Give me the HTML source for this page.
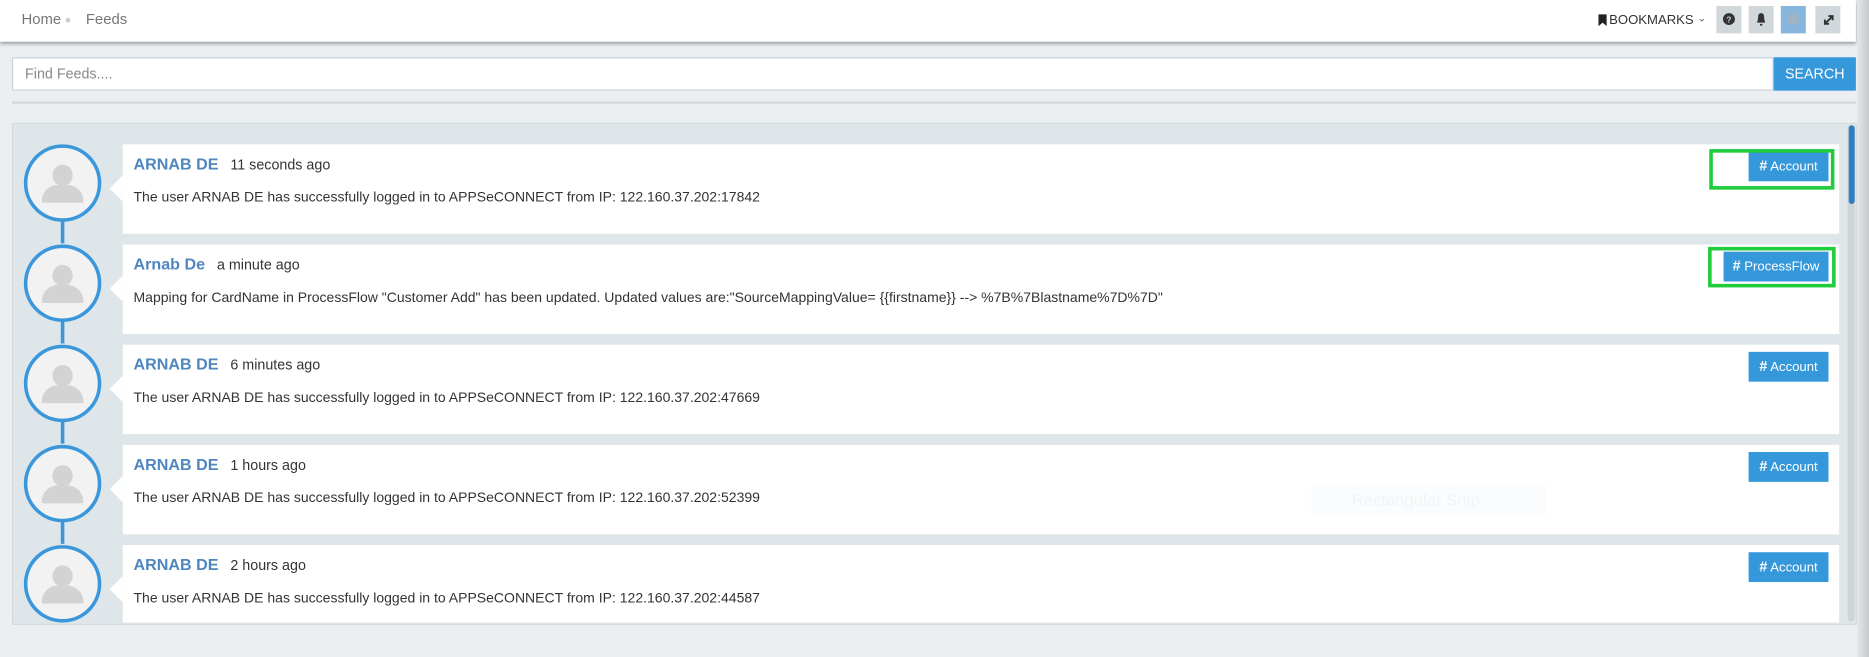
<!DOCTYPE html>
<html><head><meta charset="utf-8"><style>
html,body{margin:0;padding:0;width:1869px;height:656px;overflow:hidden;background:#ebeff2;}
#w{position:absolute;left:0;top:0;width:1568px;height:551px;transform:scale(1.19196,1.1927);transform-origin:0 0;font-family:"Liberation Sans",sans-serif;background:#ebeff2;}
.a{position:absolute;}
.hdr{left:0;top:0;width:1557px;height:35px;background:#fff;box-shadow:0 2px 3px rgba(0,0,0,.35);}
.ib{top:5px;width:21px;height:23px;background:#d0d8db;}
.card{left:103px;width:1440px;height:75px;background:#fff;}
.card:before{content:"";position:absolute;left:-11px;top:26px;border-right:11px solid #fff;border-top:11px solid transparent;border-bottom:11px solid transparent;}
.nm{position:absolute;left:9px;top:9px;font-size:13.5px;font-weight:bold;color:#4f86bf;}
.tm{font-size:12px;color:#333;font-weight:normal;margin-left:10px;}
.msg{position:absolute;left:9px;top:38px;font-size:11.75px;color:#333;white-space:nowrap;}
.tag{position:absolute;top:6px;height:25px;background:#3498db;color:#fff;font-size:11px;line-height:25px;text-align:center;}
.tag b{font-size:12px;}
.av{left:20px;width:59px;height:59px;border:3px solid #3a97dc;border-radius:50%;background:#f2f2f2;overflow:hidden;}
.av .h{position:absolute;left:21px;top:14px;width:17px;height:18px;border-radius:50%;background:#d3d3d3;}
.av .b{position:absolute;left:12px;top:31px;width:35px;height:15px;border-radius:18px 18px 2px 2px;background:#d3d3d3;}
.ln{left:51px;width:3px;height:20px;background:#3a97dc;}
.gb{border:3px solid #1fcc3c;}
</style></head><body><div id="w">
<div class="a hdr"></div>
<div class="a" style="left:18px;top:9px;font-size:12.5px;color:#777;">Home</div>
<div class="a" style="left:55px;top:15px;width:4px;height:4px;border-radius:50%;background:#ccc;"></div>
<div class="a" style="left:72px;top:9px;font-size:12.5px;color:#777;">Feeds</div>
<svg class="a" style="left:1341px;top:12px" width="7" height="10"><path d="M0 0H7V10L3.5 7L0 10Z" fill="#222"/></svg>
<div class="a" style="left:1350px;top:11px;font-size:11px;color:#333;">BOOKMARKS</div>
<div class="a" style="left:1424px;top:10px;font-size:9px;color:#666;">&#8964;</div>
<div class="a ib" style="left:1440px"><svg width="21" height="23"><circle cx="10.5" cy="11" r="5" fill="#333"/><text x="10.5" y="14" font-size="7" font-weight="bold" fill="#d0d8db" text-anchor="middle" font-family="Liberation Sans">?</text></svg></div>
<div class="a ib" style="left:1467px"><svg width="21" height="23"><path d="M7 14Q8 12 8 9Q8 6 10.5 6Q13 6 13 9Q13 12 14 14Z M9.5 15h2v1.5h-2Z" fill="#333"/></svg></div>
<div class="a ib" style="left:1494px;background:#86b6dd"><svg width="21" height="23"><circle cx="10.5" cy="11" r="5" fill="#9fb3c4"/></svg></div>
<div class="a ib" style="left:1523px"><svg width="22" height="23"><path d="M8 15L14 9M11 8.5H14.5V12M8 11.5V15H11.5" stroke="#333" stroke-width="1.6" fill="none"/></svg></div>

<div class="a" style="left:10px;top:48px;width:1476px;height:26px;background:#fff;border:1px solid #c8d0d9;"></div>
<div class="a" style="left:21px;top:55px;font-size:12px;color:#888;">Find Feeds....</div>
<div class="a" style="left:1488px;top:48px;width:69px;height:28px;background:#3498db;color:#fff;font-size:12px;line-height:28px;text-align:center;">SEARCH</div>
<div class="a" style="left:10px;top:85px;width:1547px;height:2px;background:#d6dadd;"></div>

<div class="a" style="left:10px;top:103px;width:1546px;height:419px;background:#dee6e9;border:1px solid #d4dadd;overflow:hidden;">
 <div class="a" style="left:1539px;top:1px;width:6px;height:416px;background:#cfd4d6;border-radius:3px;"></div>
 <div class="a" style="left:1540px;top:1px;width:5px;height:66px;background:#2d7fc1;border-radius:3px;"></div>
</div>

<div class="a" style="left:1558px;top:0;width:10px;height:551px;background:linear-gradient(90deg,#e4e7e9,#c6c8ca);"></div>

<div class="a ln" style="top:184px"></div>
<div class="a ln" style="top:268px"></div>
<div class="a ln" style="top:352px"></div>
<div class="a ln" style="top:436px"></div>
<div class="a av" style="top:121px"><div class="h"></div><div class="b"></div></div>
<div class="a av" style="top:205px"><div class="h"></div><div class="b"></div></div>
<div class="a av" style="top:289px"><div class="h"></div><div class="b"></div></div>
<div class="a av" style="top:373px"><div class="h"></div><div class="b"></div></div>
<div class="a" style="left:10px;top:457px;width:100px;height:65px;overflow:hidden;"><div class="a av" style="left:10px;top:0"><div class="h"></div><div class="b"></div></div></div>

<div class="a card" style="top:121px"><div class="nm">ARNAB DE<span class="tm">11 seconds ago</span></div><div class="msg">The user ARNAB DE has successfully logged in to APPSeCONNECT from IP: 122.160.37.202:17842</div><div class="tag" style="left:1364px;width:67px"><b>#</b> Account</div></div>
<div class="a card" style="top:205px"><div class="nm">Arnab De<span class="tm">a minute ago</span></div><div class="msg">Mapping for CardName in ProcessFlow "Customer Add" has been updated. Updated values are:"SourceMappingValue= {{firstname}} --&gt; %7B%7Blastname%7D%7D"</div><div class="tag" style="left:1343px;width:88px"><b>#</b> ProcessFlow</div></div>
<div class="a card" style="top:289px"><div class="nm">ARNAB DE<span class="tm">6 minutes ago</span></div><div class="msg">The user ARNAB DE has successfully logged in to APPSeCONNECT from IP: 122.160.37.202:47669</div><div class="tag" style="left:1364px;width:67px"><b>#</b> Account</div></div>
<div class="a card" style="top:373px"><div class="nm">ARNAB DE<span class="tm">1 hours ago</span></div><div class="msg">The user ARNAB DE has successfully logged in to APPSeCONNECT from IP: 122.160.37.202:52399</div><div class="tag" style="left:1364px;width:67px"><b>#</b> Account</div>
 <div class="a" style="left:997px;top:33px;width:197px;height:26px;background:#fbfcfd;color:#f1f3f5;font-size:14px;line-height:26px;padding-left:34px;box-sizing:border-box;">Rectangular Snip</div></div>
<div class="a card" style="top:457px;height:65px"><div class="nm">ARNAB DE<span class="tm">2 hours ago</span></div><div class="msg">The user ARNAB DE has successfully logged in to APPSeCONNECT from IP: 122.160.37.202:44587</div><div class="tag" style="left:1364px;width:67px"><b>#</b> Account</div></div>

<div class="a gb" style="left:1434px;top:125px;width:99px;height:28px;"></div>
<div class="a gb" style="left:1433px;top:207px;width:101px;height:28px;"></div>
</div></body></html>
